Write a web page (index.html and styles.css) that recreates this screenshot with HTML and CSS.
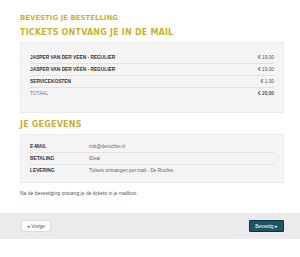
FILE: index.html
```html
<!DOCTYPE html>
<html lang="nl">
<head>
    <meta charset="UTF-8">
    <title>Bevestig je bestelling</title>
    <link rel="stylesheet" href="styles.css">
</head>
<body>
    <div class="page">
        <h2 class="step-title">Bevestig je bestelling</h2>
        <h1 class="section-title">Tickets ontvang je in de mail</h1>

        <div class="box order">
            <div class="row">
                <span class="label">Jasper van der Veen - Regulier</span>
                <span class="price">€ 19,00</span>
            </div>
            <div class="row">
                <span class="label">Jasper van der Veen - Regulier</span>
                <span class="price">€ 19,00</span>
            </div>
            <div class="row">
                <span class="label">Servicekosten</span>
                <span class="price">€ 1,00</span>
            </div>
            <div class="row total">
                <span class="label">Totaal</span>
                <span class="price">€ 20,00</span>
            </div>
        </div>

        <h1 class="section-title gegevens">Je gegevens</h1>

        <div class="box details">
            <div class="row">
                <span class="label">E-mail</span>
                <span class="value">rick@deruchte.nl</span>
            </div>
            <div class="row">
                <span class="label">Betaling</span>
                <span class="value">iDeal</span>
            </div>
            <div class="row">
                <span class="label">Levering</span>
                <span class="value">Tickets ontvangen per mail - De Ruchte</span>
            </div>
        </div>

        <p class="note">Na de bevestiging ontvang je de tickets in je mailbox.</p>
    </div>

    <div class="footer">
        <button class="btn btn-back">&#9666; Vorige</button>
        <button class="btn btn-next">Bevestig &#9656;</button>
    </div>
</body>
</html>
```

FILE: styles.css
```css
body {
    margin: 0;
    background: #fff;
    font-family: "Liberation Sans", Arial, sans-serif;
    color: #444;
}

.page {
    padding: 13px 16px 0 20px;
}

.step-title,
.section-title {
    font-family: "DejaVu Sans", sans-serif;
    font-weight: bold;
    text-transform: uppercase;
    color: #c8b22c;
    margin: 0;
}

.step-title {
    font-size: 6.8px;
    line-height: 10px;
    letter-spacing: 0.1px;
}

.section-title {
    font-size: 8px;
    line-height: 10px;
    margin-top: 5px;
    letter-spacing: 0.2px;
}

.section-title.gegevens {
    margin-top: 7px;
}

.box {
    background: #f4f4f4;
    border: 1px solid #ebebeb;
    padding: 0 9px;
}

.order {
    margin-top: 4px;
    padding-top: 9px;
    padding-bottom: 13px;
}

.details {
    margin-top: 4px;
    padding-top: 6px;
    padding-bottom: 6px;
}

.row {
    display: flex;
    align-items: center;
    height: 11px;
    font-size: 4.8px;
}

.row + .row {
    border-top: 1px solid #e2e2e2;
}

.order .label {
    flex: 1;
    font-weight: bold;
    text-transform: uppercase;
    color: #333;
}

.order .price {
    color: #555;
}

.order .total .label {
    font-weight: normal;
    color: #777;
}

.order .total .price {
    font-weight: bold;
}

.details .label {
    width: 59px;
    font-weight: bold;
    text-transform: uppercase;
    color: #333;
}

.details .value {
    color: #666;
}

.note {
    margin: 7px 0 0;
    font-size: 5px;
    line-height: 6px;
    color: #555;
}

.footer {
    margin-top: 17px;
    background: #ebebeb;
    height: 26px;
    display: flex;
    align-items: center;
    justify-content: space-between;
    padding: 0 16px 0 21px;
}

.btn {
    height: 12px;
    padding: 0 5px;
    font-family: "Liberation Sans", Arial, sans-serif;
    font-size: 4.8px;
    white-space: nowrap;
    border-radius: 1px;
}

.btn-back {
    min-width: 29px;
    background: #fff;
    border: 1px solid #dcdcdc;
    color: #555;
}

.btn-next {
    min-width: 35px;
    background: #1d5566;
    border: 1px solid #0d3340;
    color: #fff;
}
```
